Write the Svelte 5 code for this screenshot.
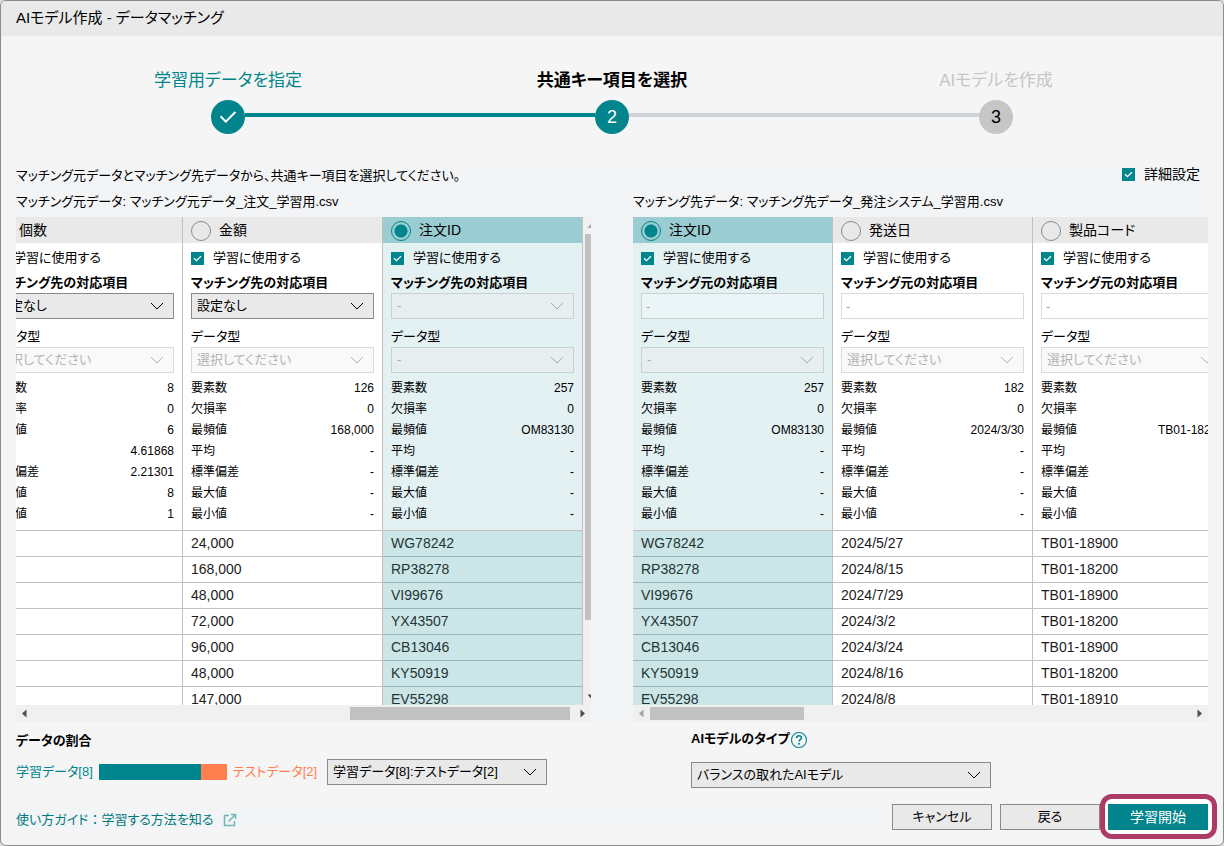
<script>
  const statNames = ['要素数', '欠損率', '最頻値', '平均', '標準偏差', '最大値', '最小値'];

  const panes = [
    {
      id: 'source',
      title: 'マッチング元データ: マッチング元データ_注文_学習用.csv',
      partner: 'マッチング先の対応項目',
      mapping: 'select',
      vertical: true,
      startDisabled: false,
      thumb: { left: 58.6, width: 40.7 },
      columns: [
        { name: '個数', map: '設定なし', type: '選択してください', stats: ['8', '0', '6', '4.61868', '2.21301', '8', '1'] },
        { name: '金額', map: '設定なし', type: '選択してください', stats: ['126', '0', '168,000', '-', '-', '-', '-'] },
        { name: '注文ID', key: true, map: '-', type: '-', stats: ['257', '0', 'OM83130', '-', '-', '-', '-'] }
      ],
      rows: [
        ['', '24,000', 'WG78242'],
        ['', '168,000', 'RP38278'],
        ['', '48,000', 'VI99676'],
        ['', '72,000', 'YX43507'],
        ['', '96,000', 'CB13046'],
        ['', '48,000', 'KY50919'],
        ['', '147,000', 'EV55298']
      ]
    },
    {
      id: 'target',
      title: 'マッチング先データ: マッチング先データ_発注システム_学習用.csv',
      partner: 'マッチング元の対応項目',
      mapping: 'text',
      vertical: false,
      startDisabled: true,
      thumb: { left: 0, width: 28.5 },
      columns: [
        { name: '注文ID', key: true, map: '-', type: '-', stats: ['257', '0', 'OM83130', '-', '-', '-', '-'] },
        { name: '発送日', map: '-', type: '選択してください', stats: ['182', '0', '2024/3/30', '-', '-', '-', '-'] },
        { name: '製品コード', map: '-', type: '選択してください', stats: ['3', '0', 'TB01-18200', '-', '-', '-', '-'] }
      ],
      rows: [
        ['WG78242', '2024/5/27', 'TB01-18900'],
        ['RP38278', '2024/8/15', 'TB01-18200'],
        ['VI99676', '2024/7/29', 'TB01-18900'],
        ['YX43507', '2024/3/2', 'TB01-18200'],
        ['CB13046', '2024/3/24', 'TB01-18900'],
        ['KY50919', '2024/8/16', 'TB01-18200'],
        ['EV55298', '2024/8/8', 'TB01-18910']
      ]
    }
  ];

  const steps = [
    { label: '学習用データを指定', state: 'done' },
    { label: '共通キー項目を選択', state: 'current' },
    { label: 'AIモデルを作成', state: 'todo' }
  ];
</script>

{#snippet dropdown(id, value, disabled)}
  <span class="dropdown" class:off={disabled}>
    <select {id} {disabled}><option>{value}</option></select>
    <svg class="chevron" width="14" height="8" viewBox="0 0 14 8" aria-hidden="true">
      <path d="M1 1l6 6 6-6" fill="none" stroke="currentColor" stroke-width="1" />
    </svg>
  </span>
{/snippet}

{#snippet tick(label)}
  <label class="tick">
    <span class="box">
      <input type="checkbox" checked />
      <svg width="13" height="13" viewBox="0 0 13 13" aria-hidden="true">
        <path d="M3 6.3l2.4 2.4L10 4.3" fill="none" stroke="#fff" stroke-width="1.3" />
      </svg>
    </span>
    {label}
  </label>
{/snippet}

{#snippet arrow(d, faded)}
  <svg class="arrow" class:faded width="17" height="17" viewBox="0 0 17 17" aria-hidden="true">
    <path {d} fill="currentColor" />
  </svg>
{/snippet}

<div class="dialog">
  <header>AIモデル作成 - データマッチング</header>

  <ol class="steps">
    {#each steps as step, i}
      <li class={step.state}>
        <span class="caption">{step.label}</span>
        <span class="rail">
          <span class="line before"></span>
          <span class="dot">
            {#if step.state === 'done'}
              <svg width="18" height="14" viewBox="0 0 18 14" aria-hidden="true">
                <path d="M1.5 6.2l5.3 5.4L16.4 2" fill="none" stroke="#fff" stroke-width="2" />
              </svg>
            {:else}
              {i + 1}
            {/if}
          </span>
          <span class="line after"></span>
        </span>
      </li>
    {/each}
  </ol>

  <main>
    <div class="intro">
      <p>マッチング元データとマッチング先データから、共通キー項目を選択してください。</p>
      {@render tick('詳細設定')}
    </div>
    <div class="panes">
      {#each panes as pane}
        <section>
          <h2>{pane.title}</h2>
          <div class="view">
            <div class="clip" class:end={pane.vertical}>
              <table>
                <thead>
                  <tr>
                    {#each pane.columns as col}
                      <th class:key={col.key}>
                        <label>
                          <input type="radio" name="{pane.id}-key" checked={col.key} />
                          {col.name}
                        </label>
                      </th>
                    {/each}
                  </tr>
                </thead>
                <tbody>
                  <tr class="setup">
                    {#each pane.columns as col, c}
                      <td class:key={col.key}>
                        {@render tick('学習に使用する')}
                        <label class="field strong" for="{pane.id}-map-{c}">{pane.partner}</label>
                        {#if pane.mapping === 'select'}
                          {@render dropdown(`${pane.id}-map-${c}`, col.map, !!col.key)}
                        {:else}
                          <input class="text" type="text" id="{pane.id}-map-{c}" value={col.map} readonly />
                        {/if}
                        <label class="field second" for="{pane.id}-type-{c}">データ型</label>
                        {@render dropdown(`${pane.id}-type-${c}`, col.type, true)}
                        <dl>
                          {#each statNames as name, s}
                            <div><dt>{name}</dt><dd>{col.stats[s]}</dd></div>
                          {/each}
                        </dl>
                      </td>
                    {/each}
                  </tr>
                  {#each pane.rows as row}
                    <tr>
                      {#each row as cell, c}
                        <td class:key={pane.columns[c].key}>{cell}</td>
                      {/each}
                    </tr>
                  {/each}
                </tbody>
              </table>
            </div>
            {#if pane.vertical}
              <div class="vbar">
                {@render arrow('M4.5 11l4-4.5 4 4.5z', true)}
                <div class="vtrack"><div class="vthumb"></div></div>
                {@render arrow('M4.5 6.5l4 4.5 4-4.5z', false)}
              </div>
            {/if}
          </div>
          <div class="hbar">
            {@render arrow('M10.5 4.5v8L6 8.5z', pane.startDisabled)}
            <div class="htrack">
              <div class="hthumb" style="margin-left: {pane.thumb.left}%; width: {pane.thumb.width}%"></div>
            </div>
            {@render arrow('M6.5 4.5v8L11 8.5z', false)}
          </div>
        </section>
      {/each}
    </div>
  </main>

  <div class="options">
    <div class="ratio">
      <label class="heading" for="ratio">データの割合</label>
      <div class="split">
        <span class="train">学習データ[8]</span>
        <span class="bar"><span class="fill" style="width: 80%"></span></span>
        <span class="test">テストデータ[2]</span>
        {@render dropdown('ratio', '学習データ[8]:テストデータ[2]', false)}
      </div>
    </div>
    <div class="model">
      <div class="model-title">
        <label class="heading" for="model">AIモデルのタイプ</label>
        <button class="help" type="button" aria-label="ヘルプ">
          <svg width="18" height="18" viewBox="0 0 18 18" aria-hidden="true">
            <circle cx="9" cy="9" r="7.5" fill="none" stroke="currentColor" stroke-width="1.1" />
            <path d="M6.6 7.1c0-1.4 1-2.3 2.4-2.3s2.4.8 2.4 2.1c0 1.7-2.3 1.7-2.3 3.5" fill="none" stroke="currentColor" stroke-width="1.6" />
            <circle cx="9.1" cy="12.7" r="1" fill="currentColor" />
          </svg>
        </button>
      </div>
      {@render dropdown('model', 'バランスの取れたAIモデル', false)}
    </div>
  </div>

  <footer>
    <a href="#guide">
      <span>使い方ガイド<span class="wide">：</span>学習する方法を知る</span>
      <svg width="14" height="14" viewBox="0 0 14 14" aria-hidden="true">
        <path d="M6 2.5H1.5v10h10V8M8 1.500h4.500V6M12.500 1.500L5.500 8.500" fill="none" stroke="currentColor" stroke-width="1.500" />
      </svg>
    </a>
    <div class="actions">
      <button type="button">キャンセル</button>
      <button type="button">戻る</button>
      <span class="ring"><button class="primary" type="button">学習開始</button></span>
    </div>
  </footer>
</div>

<style>
  :global(body) {
    background: #dedede;
  }

  * {
    box-sizing: border-box;
  }

  .dialog {
    display: flex;
    flex-direction: column;
    height: 100vh;
    border: 1px solid #8a8a8a;
    border-radius: 6px;
    background: #f5f5f5;
    overflow: hidden;
    color: #000;
    font: 13px/20px 'Liberation Sans', 'Noto Sans CJK JP', sans-serif;
    font-feature-settings: 'palt';
    white-space: nowrap;
  }

  input,
  select,
  button {
    margin: 0;
    color: inherit;
    font: inherit;
    font-feature-settings: inherit;
    border-radius: 0;
  }

  header {
    padding: 0 15px 2px;
    background: #e9e9e9;
    font-size: 15px;
    line-height: 33px;
  }

  .steps {
    display: flex;
    margin: 0;
    padding: 33px 35px 32px;
    list-style: none;
  }

  .steps li {
    flex: 1;
    display: flex;
    flex-direction: column;
    gap: 7px;
    text-align: center;
  }

  .caption {
    font-size: 17px;
    line-height: 24px;
  }

  .done .caption {
    color: #00858c;
  }

  .current .caption {
    font-weight: bold;
  }

  .todo .caption {
    color: #c6c6c6;
  }

  .rail {
    display: flex;
  }

  .line {
    flex: 1;
    height: 4px;
    margin-top: 13px;
    background: #d0d3d9;
  }

  .done .after,
  .current .before {
    background: #00858c;
  }

  .done .before,
  .todo .after {
    background: none;
  }

  .dot {
    display: flex;
    align-items: center;
    justify-content: center;
    width: 34px;
    height: 34px;
    border-radius: 50%;
    background: #00858c;
    color: #fff;
    font-size: 18px;
  }

  .todo .dot {
    background: #c6c6c6;
    color: #000;
  }

  main {
    flex: 1;
    display: flex;
    flex-direction: column;
    min-height: 0;
    margin: 0 15px;
    background: #f2f4f6;
  }

  .intro {
    display: flex;
    justify-content: space-between;
    align-items: flex-start;
    padding-right: 8px;
  }

  .intro p {
    margin: 0;
  }

  .intro .tick {
    font-size: 14px;
    line-height: 16px;
  }

  .panes {
    flex: 1;
    display: grid;
    grid-template-columns: 1fr 1fr;
    grid-template-rows: minmax(0, 1fr);
    gap: 42px;
    min-height: 0;
  }

  section {
    display: flex;
    flex-direction: column;
    min-width: 0;
  }

  h2 {
    margin: 0;
    font-size: 13px;
    font-weight: normal;
    line-height: 31px;
  }

  .view {
    flex: 1;
    display: flex;
    min-height: 0;
  }

  .clip {
    flex: 1;
    display: flex;
    align-items: flex-start;
    min-width: 0;
    overflow: hidden;
  }

  .clip.end {
    justify-content: flex-end;
  }

  table {
    flex: none;
    width: 600px;
    table-layout: fixed;
    border-collapse: separate;
    border-spacing: 0;
    background: #fff;
    font-size: 14px;
  }

  th,
  td {
    height: 26px;
    padding: 0 8px;
    border-right: 1px solid #c1c1c1;
    text-align: left;
    color: #1c1c1c;
  }

  td {
    padding-bottom: 2px;
    border-bottom: 1px solid #c1c1c1;
  }

  td.key {
    background: #cce6e7;
    border-bottom-color: #9bb5b6;
    color: #1f3536;
  }

  th {
    background: #e9e9e9;
    color: #000;
    font-weight: normal;
  }

  th.key {
    background: #9acdd1;
  }

  th label {
    display: flex;
    align-items: center;
    gap: 8px;
  }

  input[type='radio'] {
    appearance: none;
    width: 20px;
    height: 20px;
    margin-top: 2px;
    border: 1px solid #8a8a8a;
    border-radius: 50%;
  }

  input[type='radio']:checked {
    border-color: #00858c;
    background: radial-gradient(circle, #00858c 6px, transparent 7px);
  }

  .setup td {
    padding-bottom: 5px;
    color: #000;
    font-size: 13px;
    vertical-align: top;
  }

  .setup td.key {
    background: #e3f1f3;
    border-bottom-color: #c1c1c1;
  }

  .tick {
    display: flex;
    align-items: center;
    gap: 9px;
  }

  .setup .tick {
    line-height: 30px;
  }

  .box {
    display: grid;
    width: 13px;
    height: 13px;
  }

  .box > * {
    grid-area: 1 / 1;
  }

  .box input {
    appearance: none;
    background: #00858c;
  }

  .box svg {
    pointer-events: none;
  }

  .field {
    display: block;
  }

  .strong,
  .heading {
    font-weight: bold;
  }

  .second {
    margin-top: 8px;
  }

  .dropdown {
    display: grid;
    align-items: center;
  }

  .dropdown > * {
    grid-area: 1 / 1;
  }

  select {
    appearance: none;
    width: 100%;
    height: 26px;
    padding: 0 32px 0 5px;
    border: 1px solid #8a8a8a;
    background: #e9e9e9;
  }

  .chevron {
    justify-self: end;
    margin-right: 10px;
    pointer-events: none;
  }

  .off {
    color: #b4b4b4;
  }

  .off select {
    border-color: #dadada;
    background: #f9f9f9;
    opacity: 1;
  }

  .key .off {
    color: #a5adaf;
  }

  .key .off select {
    border-color: #c8d0d2;
    background: #e6eef0;
  }

  .text {
    display: block;
    width: 100%;
    height: 26px;
    padding: 0 4px;
    border: 1px solid #dadada;
    background: #fff;
    color: #a8a8a8;
  }

  .key .text {
    border-color: #c8d0d2;
    background: #ebf4f6;
  }

  dl {
    margin: 5px 0 0;
    font-size: 12px;
    line-height: 21px;
  }

  dl div {
    display: flex;
    justify-content: space-between;
  }

  dd {
    margin: 0;
  }

  .arrow {
    flex: none;
    color: #4d4d4d;
  }

  .arrow.faded {
    color: #a3a3a3;
  }

  .vbar {
    display: flex;
    flex-direction: column;
    width: 8px;
    overflow: hidden;
    background: #f0f0f0;
  }

  .vtrack {
    flex: 1;
    padding-left: 2px;
  }

  .vthumb {
    height: 85%;
    background: #c1c1c1;
  }

  .hbar {
    display: flex;
    background: #f0f0f0;
  }

  .htrack {
    flex: 1;
    padding: 2px 0;
  }

  .hthumb {
    height: 13px;
    background: #c1c1c1;
  }

  .options {
    display: grid;
    grid-template-columns: 1fr 1fr;
    gap: 42px;
    height: 82px;
    padding: 0 15px;
  }

  .ratio {
    display: flex;
    flex-direction: column;
    gap: 8px;
    padding-top: 9px;
  }

  .split {
    display: flex;
    align-items: center;
    gap: 6px;
  }

  .split .dropdown {
    width: 220px;
    margin-left: 4px;
  }

  .train {
    color: #00858c;
  }

  .test {
    color: #ff7f50;
  }

  .bar {
    width: 128px;
    background: #ff7f50;
  }

  .fill {
    display: block;
    height: 16px;
    background: #00858c;
  }

  .model {
    display: flex;
    flex-direction: column;
    gap: 13px;
    padding: 7px 0 0 58px;
  }

  .model .dropdown {
    width: 300px;
  }

  .model-title {
    display: flex;
    align-items: center;
    height: 20px;
  }

  .help {
    display: flex;
    padding: 2px 0 0;
    border: 0;
    background: none;
    color: #00858c;
  }

  footer {
    display: flex;
    align-items: center;
    justify-content: space-between;
    margin: 0 15px 15px;
    background: #f2f4f6;
  }

  footer a {
    display: flex;
    align-items: center;
    gap: 9px;
    padding-top: 6px;
    color: #007a80;
    text-decoration: none;
  }

  .wide {
    font-feature-settings: normal;
  }

  footer a svg {
    color: #6fb5ba;
  }

  .actions {
    display: flex;
    gap: 8px;
  }

  .actions button {
    width: 100px;
    height: 26px;
    padding: 0;
    border: 1px solid #8a8a8a;
    background: #e9e9e9;
  }

  .ring {
    position: relative;
    z-index: 0;
  }

  .ring::before {
    content: '';
    position: absolute;
    z-index: -1;
    inset: -10px -9px -9px -8px;
    border: 5px solid #ad3a67;
    border-radius: 12px;
    background: #fff;
  }

  .actions .primary {
    display: block;
    border: 0;
    background: #00858c;
    color: #fff;
    font-size: 14px;
  }
</style>
